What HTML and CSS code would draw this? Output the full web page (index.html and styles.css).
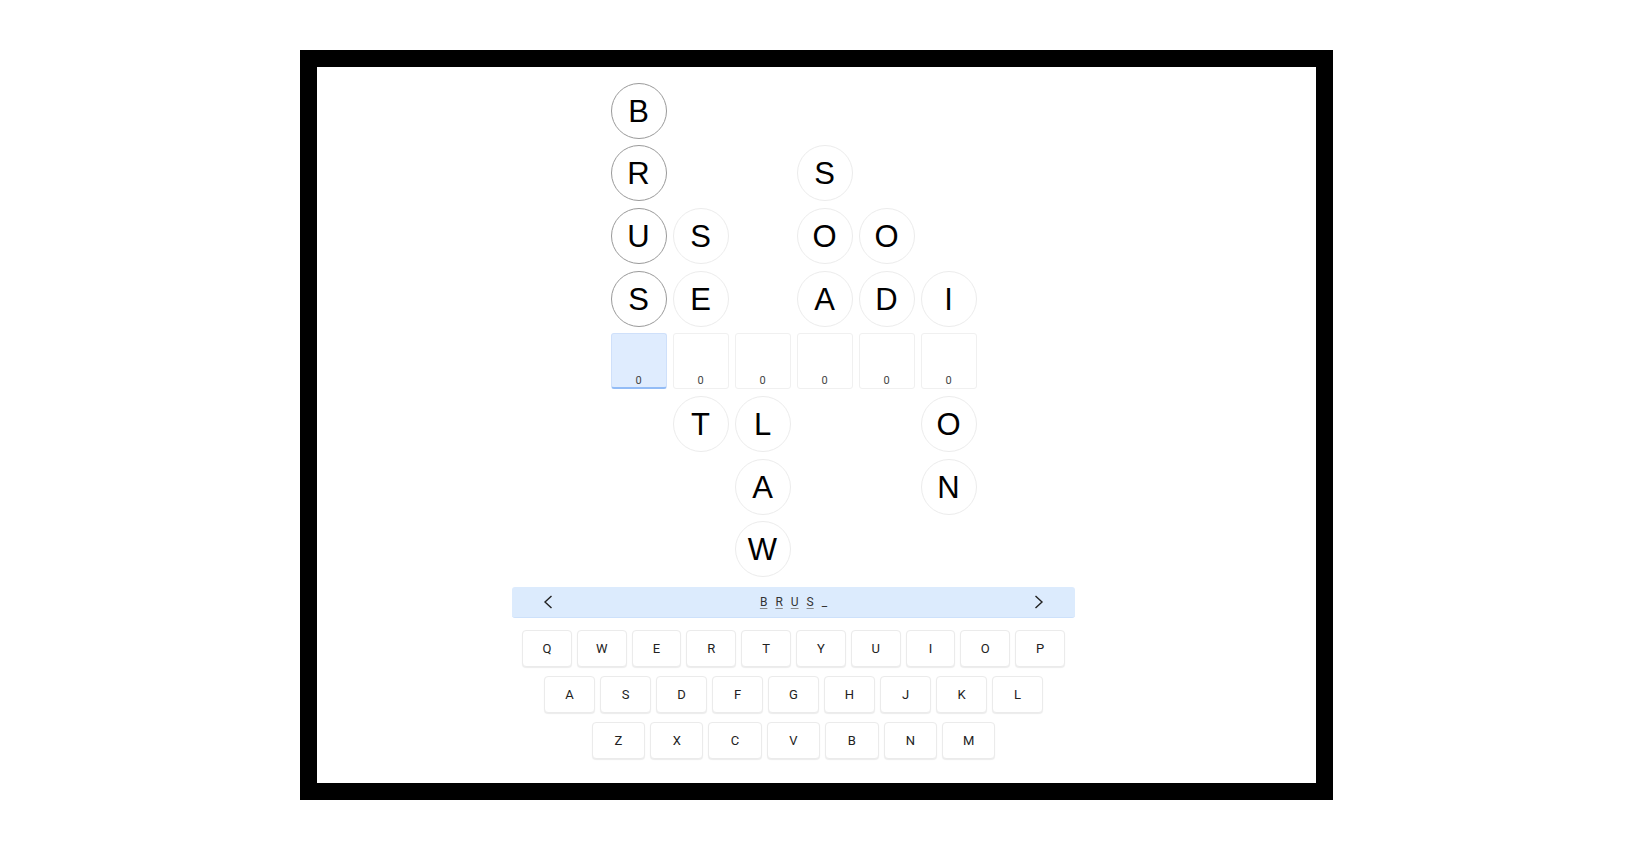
FILE: index.html
```html
<!DOCTYPE html>
<html lang="en">
<head>
<meta charset="utf-8">
<title>Word grid</title>
<link rel="stylesheet" href="styles.css">
</head>
<body>
<div class="frame">
  <div class="screen">
    <div class="board">
      <div class="cell circle strong">B</div><div class="cell"></div><div class="cell"></div><div class="cell"></div><div class="cell"></div><div class="cell"></div>
      <div class="cell circle strong">R</div><div class="cell"></div><div class="cell"></div><div class="cell circle">S</div><div class="cell"></div><div class="cell"></div>
      <div class="cell circle strong">U</div><div class="cell circle">S</div><div class="cell"></div><div class="cell circle">O</div><div class="cell circle">O</div><div class="cell"></div>
      <div class="cell circle strong">S</div><div class="cell circle">E</div><div class="cell"></div><div class="cell circle">A</div><div class="cell circle">D</div><div class="cell circle">I</div>
      <div class="cell tile active"><span>0</span></div><div class="cell tile"><span>0</span></div><div class="cell tile"><span>0</span></div><div class="cell tile"><span>0</span></div><div class="cell tile"><span>0</span></div><div class="cell tile"><span>0</span></div>
      <div class="cell"></div><div class="cell circle">T</div><div class="cell circle">L</div><div class="cell"></div><div class="cell"></div><div class="cell circle">O</div>
      <div class="cell"></div><div class="cell"></div><div class="cell circle">A</div><div class="cell"></div><div class="cell"></div><div class="cell circle">N</div>
      <div class="cell"></div><div class="cell"></div><div class="cell circle">W</div><div class="cell"></div><div class="cell"></div><div class="cell"></div>
    </div>

    <div class="bar">
      <button class="nav" aria-label="Previous">
        <svg width="10" height="14" viewBox="0 0 10 14"><path d="M8.5 1 L2 7 L8.5 13" fill="none" stroke="#222" stroke-width="1.4"/></svg>
      </button>
      <div class="word">
        <span class="ch">B</span><span class="ch">R</span><span class="ch">U</span><span class="ch">S</span><span class="ch cursor">_</span>
      </div>
      <button class="nav" aria-label="Next">
        <svg width="10" height="14" viewBox="0 0 10 14"><path d="M1.5 1 L8 7 L1.5 13" fill="none" stroke="#222" stroke-width="1.4"/></svg>
      </button>
    </div>

    <div class="keyboard">
      <div class="krow r1">
        <div class="key">Q</div><div class="key">W</div><div class="key">E</div><div class="key">R</div><div class="key">T</div><div class="key">Y</div><div class="key">U</div><div class="key">I</div><div class="key">O</div><div class="key">P</div>
      </div>
      <div class="krow r2">
        <div class="key">A</div><div class="key">S</div><div class="key">D</div><div class="key">F</div><div class="key">G</div><div class="key">H</div><div class="key">J</div><div class="key">K</div><div class="key">L</div>
      </div>
      <div class="krow r3">
        <div class="key">Z</div><div class="key">X</div><div class="key">C</div><div class="key">V</div><div class="key">B</div><div class="key">N</div><div class="key">M</div>
      </div>
    </div>
  </div>
</div>
</body>
</html>
```

FILE: styles.css
```css
* { box-sizing: border-box; }

html, body {
  margin: 0;
  padding: 0;
  background: #fff;
}

body {
  width: 1633px;
  height: 850px;
  display: flex;
  align-items: center;
  justify-content: center;
  font-family: Roboto, "Liberation Sans", Arial, sans-serif;
  color: #111;
}

.frame {
  width: 1033px;
  height: 750px;
  margin-top: -1px;
  border: 17px solid #000;
  background: #fff;
}

.screen {
  height: 100%;
  padding: 16px 46px 0 0;
  display: flex;
  flex-direction: column;
  align-items: center;
}

.board {
  display: grid;
  grid-template-columns: repeat(6, 56px);
  grid-auto-rows: 56px;
  column-gap: 6px;
  row-gap: 6.7px;
}

.cell {
  width: 56px;
  height: 56px;
}

.circle {
  border-radius: 50%;
  border: 1px solid #ececec;
  display: flex;
  align-items: center;
  justify-content: center;
  font-family: "Liberation Sans", Arial, sans-serif;
  font-size: 31px;
  font-weight: 400;
  color: #000;
  line-height: 1;
  padding-top: 1px;
}

.circle.strong {
  border-color: #9a9a9a;
}

.tile {
  border: 1px solid #f0f0f0;
  border-radius: 3px;
  display: flex;
  align-items: flex-end;
  justify-content: center;
  padding-bottom: 1px;
  font-size: 11px;
  color: #444;
}

.tile.active {
  background: #dfecfe;
  border: 1px solid #cfe0fa;
  border-bottom: 2px solid #93bcf6;
  padding-bottom: 0;
}

.bar {
  margin-top: 10px;
  width: 563px;
  height: 31px;
  background: #dcebfd;
  border-bottom: 1px solid #cde1fb;
  border-radius: 3px;
  display: flex;
  align-items: center;
  justify-content: space-between;
  padding: 0 24px;
}

.nav {
  width: 24px;
  height: 24px;
  border: 0;
  padding: 0;
  background: transparent;
  display: flex;
  align-items: center;
  justify-content: center;
}

.word {
  display: flex;
  gap: 8px;
  font-size: 12px;
  color: #333;
}

.ch {
  text-decoration: underline;
  text-decoration-color: #888;
  text-underline-offset: 2px;
}

.cursor {
  text-decoration: none;
  color: #333;
}

.keyboard {
  margin-top: 12px;
  display: flex;
  flex-direction: column;
  align-items: center;
  gap: 9px;
}

.krow {
  display: flex;
  gap: 5px;
}

.key {
  height: 37px;
  background: #fff;
  border: 1px solid #ebebeb;
  border-radius: 4px;
  box-shadow: 0 1px 1px rgba(0, 0, 0, 0.08);
  display: flex;
  align-items: center;
  justify-content: center;
  font-size: 13px;
  color: #222;
}

.r1 .key { width: 49.8px; }
.r2 .key { width: 51px; }
.r3 .key { width: 53.4px; }
```
